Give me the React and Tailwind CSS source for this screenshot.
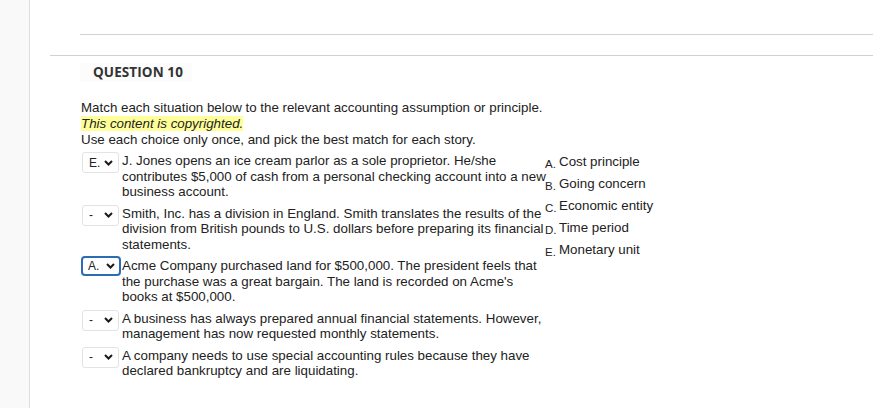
import { useState } from "react";

const stories = [
  {
    value: "E.",
    text: "J. Jones opens an ice cream parlor as a sole proprietor. He/she contributes $5,000 of cash from a personal checking account into a new business account.",
  },
  {
    value: "-",
    text: "Smith, Inc. has a division in England. Smith translates the results of the division from British pounds to U.S. dollars before preparing its financial statements.",
  },
  {
    value: "A.",
    text: "Acme Company purchased land for $500,000. The president feels that the purchase was a great bargain. The land is recorded on Acme's books at $500,000.",
    focused: true,
  },
  {
    value: "-",
    text: "A business has always prepared annual financial statements. However, management has now requested monthly statements.",
  },
  {
    value: "-",
    text: "A company needs to use special accounting rules because they have declared bankruptcy and are liquidating.",
  },
];

const choices = [
  ["A.", "Cost principle"],
  ["B.", "Going concern"],
  ["C.", "Economic entity"],
  ["D.", "Time period"],
  ["E.", "Monetary unit"],
];

function Chevron() {
  return (
    <svg width="9" height="6" viewBox="0 0 9 6" className="shrink-0">
      <path d="M1 1l3.5 3.5L8 1" fill="none" stroke="#1a1a1a" strokeWidth="2" />
    </svg>
  );
}

function MatchSelect({ value, focused }) {
  return (
    <div className="w-[40px] shrink-0">
      <div
        className={
          focused
            ? "w-[40px] h-[20px] mt-[-2px] flex items-center justify-between pl-[5px] pr-[4px] rounded-[4px] border-2 border-[#2b6cb5] bg-white text-[12px]"
            : "ml-[1px] w-[37px] h-[21px] mt-[-1px] flex items-center justify-between pl-[6px] pr-[5px] rounded-[3px] border border-[#e3e3e3] bg-white text-[12px]"
        }
      >
        <span>{value}</span>
        <Chevron />
      </div>
    </div>
  );
}

export default function App() {
  const [items] = useState(stories);

  return (
    <div
      className="flex h-[408px] bg-white text-[#222]"
      style={{ fontFamily: '"Liberation Sans", Arial, sans-serif' }}
    >
      <div className="w-[30px] shrink-0 bg-[#f9f9f9] border-r border-[#dedede]" />

      <div className="flex-1 pt-[34px]">
        <div className="h-px ml-[50px] bg-[#d2d2d2]" />
        <div className="h-px ml-[20px] mt-[20px] bg-[#d2d2d2]" />

        <div className="ml-[50px] mt-[7px] w-[112px] h-[19px] flex items-center pl-[13px] bg-[#fcfcfc]">
          <span
            className="text-[13.5px] font-bold text-[#333] tracking-[0.1px]"
            style={{ fontFamily: '"Open Sans", sans-serif' }}
          >
            QUESTION 10
          </span>
        </div>

        <div className="ml-[51px] mt-[18px] text-[13.33px] leading-[16px]">
          <p>Match each situation below to the relevant accounting assumption or principle.</p>
          <p>
            <span className="italic bg-[#ffff99]">This content is copyrighted.</span>
          </p>
          <p>Use each choice only once, and pick the best match for each story.</p>

          <div className="flex mt-[5px]">
            <div className="w-[464px] shrink-0 flex flex-col gap-[6px]">
              {items.map((s, i) => (
                <div key={i} className="flex gap-[1px]">
                  <MatchSelect value={s.value} focused={s.focused} />
                  <p className="w-[426px] shrink-0 leading-[15.5px]">{s.text}</p>
                </div>
              ))}
            </div>

            <div className="flex flex-col gap-[6px] pt-[1px]">
              {choices.map(([letter, label]) => (
                <div key={letter} className="flex items-baseline h-[16px] leading-[16px]">
                  <span className="w-[14px] text-[11.5px] relative top-[2px]">{letter}</span>
                  <span>{label}</span>
                </div>
              ))}
            </div>
          </div>
        </div>
      </div>
    </div>
  );
}
